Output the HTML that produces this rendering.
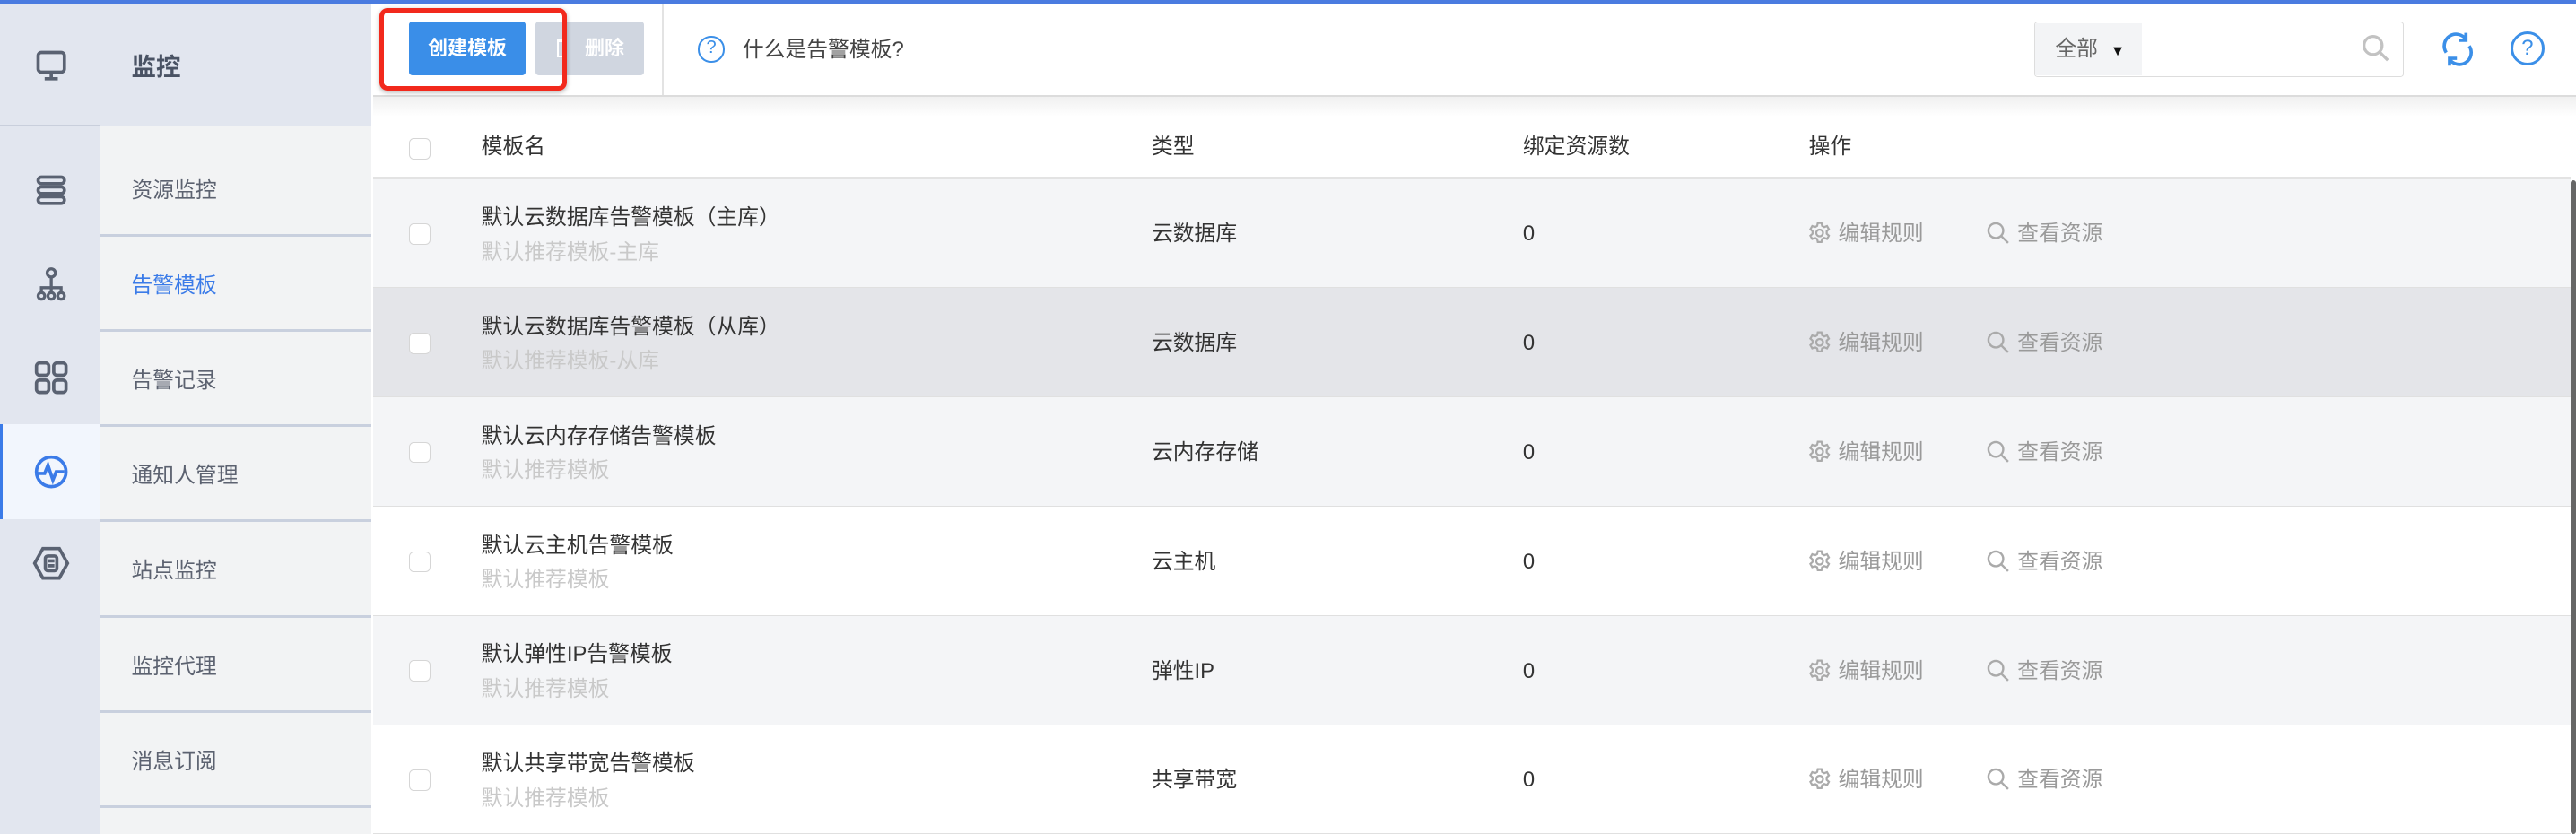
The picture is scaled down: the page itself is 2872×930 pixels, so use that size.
<!DOCTYPE html>
<html><head><meta charset="utf-8"><style>
*{margin:0;padding:0;box-sizing:border-box}
html,body{width:2872px;height:930px;overflow:hidden;background:#fff}
#w{zoom:1.8316;width:1568px;height:508px;position:relative;font-family:"Liberation Sans","Noto Sans CJK SC",sans-serif;font-size:13px;color:#333}
.a{position:absolute;line-height:18px}
.topline{left:0;top:0;width:1568px;height:2px;background:#4a7be0}
.ic{left:0;top:2px;width:61px;height:506px;background:#e2e6ef;border-right:1px solid #c9cfdc}
.nav{left:61px;top:2px;width:165px;height:506px;background:#f2f3f4}
.nh{left:61px;top:2px;width:165px;height:75px;background:#e2e6ef;font-size:15px;font-weight:bold;color:#4a5364;padding:30px 0 0 19px}
.ni{left:61px;width:165px;height:58px;border-bottom:2px solid #c9d0de;color:#5c6270;font-size:13px;padding-left:19px;line-height:60px}
.row{left:227px;width:1338px;height:67px;border-bottom:1px solid #e0e0e0}
.cb{width:13px;height:13px;border:1px solid #d6d6d6;border-radius:3px;background:#fff}
.t1{font-size:13px;color:#333}
.t2{font-size:13px;color:#c9c9c9}
.gy{color:#9a9a9a;font-size:13px}
.gear{display:inline-block;vertical-align:-3px;margin-right:4px}
</style></head><body><div id="w">
<div class="a topline"></div>
<div class="a ic"></div>
<div class="a" style="left:0;top:76px;width:61px;height:1px;background:#c9cfdc"></div>
<div class="a" style="left:0;top:258px;width:61px;height:58px;background:#f2f6fd;border-left:2px solid #3b7be8"></div>
<svg class="a" style="left:20px;top:29px" width="22" height="22" viewBox="0 0 22 22" fill="none" stroke="#5a6272" stroke-width="2"><rect x="3" y="3" width="16" height="12" rx="2"/><path d="M11 15v4M7 19h8"/></svg>
<svg class="a" style="left:20px;top:105px" width="22" height="22" viewBox="0 0 22 22" fill="none" stroke="#5a6272" stroke-width="2"><rect x="3" y="3" width="16" height="4" rx="2"/><rect x="3" y="9" width="16" height="4" rx="2"/><rect x="3" y="15" width="16" height="4" rx="2"/></svg>
<svg class="a" style="left:20px;top:162px" width="22" height="22" viewBox="0 0 22 22" fill="none" stroke="#5a6272" stroke-width="1.8"><circle cx="11" cy="4" r="2.5"/><path d="M11 6.5v6M5 16v-3h12v3M11 12.5v3.5"/><circle cx="5" cy="18" r="2"/><circle cx="11" cy="18" r="2"/><circle cx="17" cy="18" r="2"/></svg>
<svg class="a" style="left:20px;top:219px" width="22" height="22" viewBox="0 0 22 22" fill="none" stroke="#5a6272" stroke-width="2"><rect x="2" y="2" width="7.5" height="7.5" rx="2"/><rect x="12.5" y="2" width="7.5" height="7.5" rx="2"/><rect x="2" y="12.5" width="7.5" height="7.5" rx="2"/><rect x="12.5" y="12.5" width="7.5" height="7.5" rx="2"/></svg>
<svg class="a" style="left:20px;top:276px" width="22" height="22" viewBox="0 0 22 22" fill="none" stroke="#3b7be8" stroke-width="2"><circle cx="11" cy="11" r="9"/><path d="M3 12h4l2-5 3 9 2-5h5"/></svg>
<svg class="a" style="left:19px;top:332px" width="24" height="22" viewBox="0 0 24 22" fill="none" stroke="#5a6272" stroke-width="2"><path d="M7 2h10l5 9-5 9H7L2 11z"/><rect x="8.5" y="6.5" width="7" height="9" rx="1.5"/><path d="M10 9.5h4M10 12.5h4"/></svg>
<div class="a nav"></div>
<div class="a nh">监控</div>
<div class="a ni" style="top:86px">资源监控</div>
<div class="a ni" style="top:144px;color:#3b7be8">告警模板</div>
<div class="a ni" style="top:202px">告警记录</div>
<div class="a ni" style="top:260px">通知人管理</div>
<div class="a ni" style="top:318px">站点监控</div>
<div class="a ni" style="top:376px">监控代理</div>
<div class="a ni" style="top:434px">消息订阅</div>
<div class="a" style="left:227px;top:58px;width:1341px;height:1px;background:#dcdcdc"></div>
<div class="a" style="left:227px;top:59px;width:1341px;height:12px;background:linear-gradient(#f0f0f0,#fff)"></div>
<div class="a" style="left:249px;top:13px;width:71px;height:33px;background:#3a8ee8;border-radius:2px;color:#fff;font-size:12px;font-weight:bold;text-align:center;line-height:33px">创建模板</div>
<div class="a" style="left:326px;top:13px;width:66px;height:33px;background:#d0d6e0;border-radius:2px;color:#fff;font-size:12px;font-weight:bold;line-height:33px;padding-left:30px">删除</div>
<div class="a" style="left:339px;top:24px;width:5px;height:11px;border:1.5px solid #fff;border-top-width:2px"></div>
<div class="a" style="left:231px;top:5px;width:114px;height:50px;border:3px solid #f2291c;border-radius:5px;box-shadow:0 1px 3px rgba(0,0,0,.3)"></div>
<div class="a" style="left:403px;top:2px;width:1px;height:56px;background:#e3e3e3"></div>
<div class="a" style="left:425px;top:22px;width:16px;height:16px;border:1.5px solid #3b8fe8;border-radius:50%;color:#3b8fe8;font-size:11px;text-align:center;line-height:13px">?</div>
<div class="a" style="left:452px;top:22px;font-size:13px;color:#444">什么是告警模板?</div>
<div class="a" style="left:1238px;top:13px;width:225px;height:34px;border:1px solid #ddd;border-radius:2px"></div>
<div class="a" style="left:1239px;top:14px;width:65px;height:32px;background:#f3f4f6;color:#666;font-size:13px;line-height:32px;padding-left:12px">全部 <span style="font-size:9px;color:#111;margin-left:4px">▼</span></div>
<svg class="a" style="left:1437px;top:20px" width="18" height="18" viewBox="0 0 18 18" fill="none" stroke="#c2c2c2" stroke-width="1.8"><circle cx="7.5" cy="7.5" r="5.5"/><path d="M11.5 11.5l5 5"/></svg>
<svg class="a" style="left:1485px;top:18px" width="22" height="24" viewBox="0 0 22 24" fill="none" stroke="#3b8fe8" stroke-width="2"><path d="M4 14a7 7 0 0 1 12-8M18 10a7 7 0 0 1-12 8"/><path d="M16 2v4.5h-4.5M6 22v-4.5h4.5"/></svg>
<div class="a" style="left:1528px;top:19px;width:21px;height:21px;border:1.8px solid #3b8fe8;border-radius:50%;color:#3b8fe8;font-size:13px;text-align:center;line-height:18px">?</div>
<div class="a row" style="top:59px;height:50px;background:transparent;border-bottom:2px solid #e3e3e3"></div>
<div class="a cb" style="left:249px;top:84px"></div>
<div class="a t1" style="left:293px;top:81px">模板名</div>
<div class="a t1" style="left:701px;top:81px">类型</div>
<div class="a t1" style="left:927px;top:81px">绑定资源数</div>
<div class="a t1" style="left:1101px;top:81px">操作</div>
</div>
<script>
var w=document.getElementById('w');
var data=[["默认云数据库告警模板（主库）","默认推荐模板-主库","云数据库","#f4f5f7"],["默认云数据库告警模板（从库）","默认推荐模板-从库","云数据库","#e4e5e9"],["默认云内存存储告警模板","默认推荐模板","云内存存储","#f4f5f7"],["默认云主机告警模板","默认推荐模板","云主机","#fff"],["默认弹性IP告警模板","默认推荐模板","弹性IP","#f4f5f7"],["默认共享带宽告警模板","默认推荐模板","共享带宽","#fff"]];
var gear='<svg class="gear" width="15" height="15" viewBox="0 0 16 16" fill="none" stroke="#aaa" stroke-width="1.3"><path d="M6.8 1.5h2.4l.4 1.9 1.4.8 1.8-.7 1.2 2.1-1.4 1.3v1.6l1.4 1.3-1.2 2.1-1.8-.7-1.4.8-.4 1.9H6.8l-.4-1.9-1.4-.8-1.8.7L2 9.8l1.4-1.3V6.9L2 5.6l1.2-2.1 1.8.7 1.4-.8z"/><circle cx="8" cy="8" r="2.2"/></svg>';
var mag='<svg class="gear" width="15" height="15" viewBox="0 0 16 16" fill="none" stroke="#aaa" stroke-width="1.4"><circle cx="6.5" cy="6.5" r="4.8"/><path d="M10 10l4.5 4.5"/></svg>';
var h='';
data.forEach(function(d,i){var t=109+i*66.5;
h+='<div class="a row" style="top:'+t+'px;height:66.5px;background:'+d[3]+'"></div>';
h+='<div class="a cb" style="left:249px;top:'+(t+27)+'px"></div>';
h+='<div class="a t1" style="left:293px;top:'+(t+15)+'px">'+d[0]+'</div>';
h+='<div class="a t2" style="left:293px;top:'+(t+36)+'px">'+d[1]+'</div>';
h+='<div class="a t1" style="left:701px;top:'+(t+25)+'px">'+d[2]+'</div>';
h+='<div class="a t1" style="left:927px;top:'+(t+25)+'px">0</div>';
h+='<div class="a gy" style="left:1100px;top:'+(t+25)+'px">'+gear+'编辑规则</div>';
h+='<div class="a gy" style="left:1209px;top:'+(t+25)+'px">'+mag+'查看资源</div>';});
h+='<div class="a" style="left:1565px;top:110px;width:3px;height:398px;background:#666;border-radius:2px;z-index:5"></div>';
w.insertAdjacentHTML('beforeend',h);
</script>
</body></html>
